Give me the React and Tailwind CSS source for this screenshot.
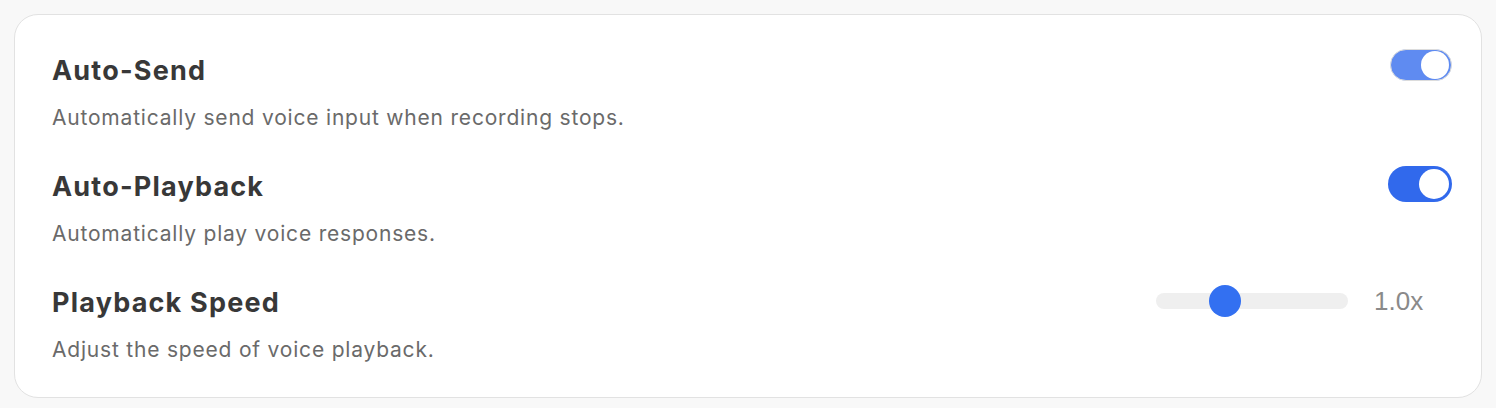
import { useState } from 'react';

const font = { fontFamily: 'Inter, "Noto Sans", sans-serif' };

function Toggle({ on, soft, onClick }) {
  if (soft) {
    return (
      <button onClick={onClick} className="w-[62px] h-[32px] rounded-full bg-[#5f8bf1] border border-[#dcdcdc] flex items-center justify-end px-[2px]">
        <span className="w-[28px] h-[28px] rounded-full bg-white block" />
      </button>
    );
  }
  return (
    <button onClick={onClick} className={`w-[64px] h-[36px] rounded-full flex items-center px-[3px] ${on ? 'bg-[#3169ec] justify-end' : 'bg-[#e5e5e5] justify-start'}`}>
      <span className="w-[30px] h-[30px] rounded-full bg-white block" />
    </button>
  );
}

function Row({ title, desc, children }) {
  return (
    <div className="flex justify-between items-start">
      <div>
        <h3 className="text-[27px] leading-[32px] font-bold text-[#383838] tracking-[1.2px]">{title}</h3>
        <p className="text-[21px] leading-[28px] text-[#6a6a6a] mt-[17px] tracking-[0.8px]">{desc}</p>
      </div>
      {children}
    </div>
  );
}

export default function App() {
  const [send, setSend] = useState(true);
  const [play, setPlay] = useState(true);
  const [speed] = useState(1.0);

  return (
    <div className="min-h-[408px] bg-[#f8f8f8] p-[14px]" style={font}>
      <div className="bg-white border-[1.5px] border-[#e2e2e2] rounded-[24px] pl-[37px] pr-[30px] pt-[40px] pb-[33px] flex flex-col gap-[39px]">
        <Row title="Auto-Send" desc="Automatically send voice input when recording stops.">
          <div className="-mt-[6px] -mr-[1px]">
            <Toggle soft={send} on={send} onClick={() => setSend(!send)} />
          </div>
        </Row>
        <Row title="Auto-Playback" desc="Automatically play voice responses.">
          <div className="-mt-[5px] -mr-[1px]">
            <Toggle on={play} onClick={() => setPlay(!play)} />
          </div>
        </Row>
        <Row title="Playback Speed" desc="Adjust the speed of voice playback.">
          <div className="flex items-center gap-[26px] -mt-[2px]">
            <div className="relative w-[192px] h-[16px] rounded-full bg-[#efefef]">
              <span className="absolute top-1/2 -translate-y-1/2 left-[53px] w-[32px] h-[32px] rounded-full bg-[#3370f1]" />
            </div>
            <span className="w-[77px] text-[26px] leading-[32px] text-[#8a8a8a]" style={{ fontFamily: '"Liberation Sans", Arial, sans-serif' }}>{speed.toFixed(1)}x</span>
          </div>
        </Row>
      </div>
    </div>
  );
}
